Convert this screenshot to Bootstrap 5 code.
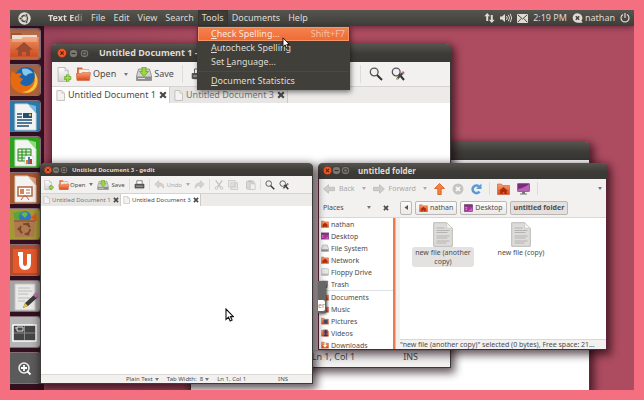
<!DOCTYPE html>
<html lang="en">
<head>
<meta charset="utf-8">
<meta name="viewport" content="width=device-width, initial-scale=1">
<title>Desktop</title>
<link href="https://cdn.jsdelivr.net/npm/bootstrap@5.3.0/dist/css/bootstrap.min.css" rel="stylesheet">
<style>
  body { background: #f46f7f; padding: 10px; font-family: "Noto Sans", "Open Sans", sans-serif; font-size: 9px; line-height: 12px; color: #4c4c4c; }
  button, input, textarea, select { font: inherit; color: inherit; }
  button { background: none; border: 0; padding: 0; white-space: nowrap; }
  svg { display: block; flex: none; }
  .desktop { min-height: calc(100vh - 20px); background: linear-gradient(90deg, #96435a, #ad4c60 40%); }

  /* top panel */
  .panel { height: 16px; background: linear-gradient(#55544e, #3d3c38); color: #dfdbd2; box-shadow: 0 1px 6px rgba(40,10,25,.6); z-index: 20; }
  .logo-slot { width: 38px; padding-left: 8px; }
  .app-name { width: 39px; white-space: nowrap; font-weight: 700; -webkit-mask-image: linear-gradient(90deg, #000 60%, transparent); mask-image: linear-gradient(90deg, #000 60%, transparent); }
  .menu-item { padding: 0 4px; height: 16px; }
  .menu-item.active-menu { background: #3c3b37; box-shadow: 0 0 0 1px #35342f inset; }
  .tray { gap: 5px; padding-right: 4px; }

  /* launcher */
  .launcher { width: 34px; background: #321020; padding-top: 2px; z-index: 1; }
  .tile { width: 31px; height: 32px; margin-bottom: 4px; border-radius: 0 4px 4px 0; overflow: hidden; border: 1px solid rgba(255,255,255,.4); border-left: 0; display: block; }

  /* windows */
  .win { position: absolute; border: 1px solid #3c3b37; border-top: 0; border-radius: 5px 5px 0 0; background: #f2f1f0; box-shadow: 2px 3px 9px 2px rgba(20,0,10,.65); display: flex; flex-direction: column; }
  .bar { background: linear-gradient(#55544e, #3c3b37 55%, #393834); color: #dfdbd2; font-weight: 700; border-radius: 5px 5px 0 0; margin: 0 -1px; }
  .w-first { left: 41px; top: 34px; width: 400px; height: 324px; z-index: 3; }
  .w-back { left: 180px; top: 132px; width: 400px; bottom: -1px; z-index: 2; }
  .w-second { left: 30px; top: 153px; width: 273px; height: 221px; z-index: 6; font-size: 6px; line-height: 8px; }
  .w-files { left: 308px; top: 153px; width: 289px; height: 187px; z-index: 5; font-size: 7px; line-height: 9px; border-color: #5a2236; }
  .w-first .bar, .w-back .bar { height: 18px; padding-left: 6px; gap: 2px; }
  .w-second .bar { height: 13px; padding-left: 4px; font-size: 6px; }
  .w-files .bar { height: 16px; padding-left: 5px; font-size: 8px; }
  .editor { flex: 1; width: 100%; border: 0; resize: none; background: #fff; display: block; min-height: 0; outline: 0; }
  .rule { width: 1px; align-self: stretch; background: #dedcd9; margin: 3px 0; }
  .off { color: #a9a7a3; }
  .caret { width: 0; height: 0; border: 2px solid transparent; border-top: 3px solid #777; border-bottom: 0; display: block; }
  .off .caret, .caret.off { border-top-color: #aaa; }
  .snug { gap: 2px; }

  .tabs { background: #edebe9; border-top: 1px solid #d6d3d0; }
  .doc-tab { border-right: 1px solid #cfccc8; background: #e8e6e4; color: #777; }
  .doc-tab.current { background: #fff; color: #4c4c4c; }
  .w-first .toolbar { height: 24px; padding: 0 5px; }
  .w-first .doc-tab { height: 16px; width: 118px; padding: 0 4px; gap: 3px; }
  .w-second .toolbar { height: 17px; padding: 0 3px; gap: 4px; }
  .w-second .doc-tab { height: 12px; width: 80px; padding: 0 2px; gap: 2px; }
  .status { border-top: 1px solid #dad7d4; }

  /* dropdown menu of the panel */
  .tools-menu { position: absolute; left: 187px; top: 16px; width: 153px; padding: 1px 1px 2px; background: #403f3a; color: #dfdbd2; z-index: 21; box-shadow: 1px 2px 5px rgba(0,0,0,.5); }
  .tools-menu button { height: 14px; padding: 0 4px 0 13px; }
  .tools-menu u { text-decoration-thickness: 1px; text-underline-offset: 1px; }
  .tools-menu .hot { background: linear-gradient(#f58350, #ee6a35); box-shadow: 0 0 0 1px #f79468 inset; color: #fbe6dc; }
  .tools-menu .keys { color: #f3c2a8; }
  .divider { height: 1px; background: #4a4944; margin: 2px 0; }

  /* file manager */
  .w-files .toolbar { height: 20px; gap: 7px; }
  .pathbar { height: 20px; gap: 3px; border-bottom: 1px solid #dad7d4; }
  .crumb { height: 14px; border: 1px solid #bbb8b3; border-radius: 2px; background: linear-gradient(#fbfbfa, #ebe9e7); padding: 0 3px; }
  .crumb.here { background: #e3e0dd; font-weight: 700; }
  .places { width: 74px; background: #fff; overflow: hidden; }
  .places a { height: 12px; padding-left: 2px; gap: 2px; color: inherit; text-decoration: none; white-space: nowrap; }
  .splitter { width: 3px; background: #ee7a4b; border-right: 1px solid #f7b597; }
  .file { width: 62px; background: none; }
  .file span { border-radius: 3px; padding: 1px 0; white-space: normal; }
  .file.picked span { background: #e4e2e0; }

  .tooltip-rest { position: absolute; left: 308px; top: 271px; z-index: 7; font-size: 7px; box-shadow: 1px 1px 3px rgba(0,0,0,.7); background: #666; border-radius: 0 3px 3px 0; padding-top: 19px; color: #888; }
  .tooltip-rest span { display: block; background: #fff; border-radius: 0 2px 2px 0; margin: 0 1px 2px 0; line-height: 11px; }
  .pointer { position: absolute; z-index: 30; }
  .pointer-menu { left: 272px; top: 27px; }
  .pointer-edit { left: 215px; top: 298px; }
</style>
<script src="https://cdn.jsdelivr.net/npm/bootstrap@5.3.0/dist/js/bootstrap.bundle.min.js"></script>
</head>
<body>
<svg width="0" height="0" class="position-absolute" aria-hidden="true">
  <defs>
    <linearGradient id="gFold" x2="0" y2="1"><stop stop-color="#f9a070"/><stop offset="1" stop-color="#d9481c"/></linearGradient>
    <linearGradient id="gDoc" x2="0" y2="1"><stop stop-color="#fff"/><stop offset="1" stop-color="#d2d1cf"/></linearGradient>
  </defs>
  <symbol id="i-close" viewBox="0 0 10 10"><circle cx="5" cy="5" r="4.5" fill="#ee5a2a" stroke="#8c2e12" stroke-width=".7"/><path d="M3.3 3.3l3.4 3.4M6.7 3.3L3.3 6.7" stroke="#5c1f0c" stroke-width="1.2"/></symbol>
  <symbol id="i-min" viewBox="0 0 10 10"><circle cx="5" cy="5" r="4.5" fill="#7b7971" stroke="#33322e" stroke-width=".7"/><path d="M2.8 5h4.4" stroke="#33322e" stroke-width="1.2"/></symbol>
  <symbol id="i-max" viewBox="0 0 10 10"><circle cx="5" cy="5" r="4.5" fill="#7b7971" stroke="#33322e" stroke-width=".7"/><path d="M3 3.3h4v3.4H3z" fill="none" stroke="#33322e"/></symbol>
  <symbol id="i-page" viewBox="0 0 10 12"><path d="M1 .5h5.500l3 3v8H1z" fill="#f4f3f2" stroke="#bdbcb9"/><path d="M6.500.5v3h3" fill="#ddd" stroke="#c5c4c1" stroke-width=".7"/></symbol>
  <symbol id="i-new" viewBox="0 0 14 14"><path d="M1 .5h6.500l3 3v10H1z" fill="url(#gDoc)" stroke="#b4b3b0" stroke-width=".8"/><path d="M7.500.5v3h3" fill="none" stroke="#b4b3b0" stroke-width=".7"/><path d="M10 7v6.500M6.700 10.200h6.600" stroke="#6ba52c" stroke-width="3.200"/><path d="M10 7.500v5.500M7.300 10.200h5.400" stroke="#a2dc50" stroke-width="1.600"/></symbol>
  <symbol id="i-open" viewBox="0 0 15 14"><path d="M1 .5h5l1 1.500h6V12H1z" fill="#d9683c"/><path d="M3 2.500h10v6H3z" fill="#f8f1ea" stroke="#c8bbb0" stroke-width=".5"/><path d="M0 6.500h5l1-1h8.500L13.500 13.500H1z" fill="url(#gFold)" stroke="#c95f35" stroke-width=".5"/></symbol>
  <symbol id="i-save" viewBox="0 0 16 14"><path d="M2.500 2h11L15.500 9v4.500H.5V9z" fill="#d2d2d0" stroke="#858582" stroke-width=".8"/><path d="M.8 9.500h14.400v3.700H.8z" fill="#8d8e8b"/><path d="M2 11.500h7" stroke="#ddd"/><path d="M6 0h4v4.500h2.500L8 9.500 3.500 4.500H6z" fill="#9bd93a" stroke="#5f9a1e" stroke-width=".7"/></symbol>
  <symbol id="i-print" viewBox="0 0 14 13"><path d="M3.500 5V1h7v4" fill="#fff" stroke="#666"/><rect x=".7" y="5" width="12.600" height="6" rx="1" fill="#555"/><path d="M2.500 8h9M2.500 11.500h9" stroke="#ccc"/></symbol>
  <symbol id="i-undo" viewBox="0 0 14 12"><path d="M6 1v3c5 0 7 2 6.500 7-1.500-3-3-3.500-6.500-3.500v3L.8 5.700z" fill="#d4d2cf" stroke="#bab8b4" stroke-width=".7"/></symbol>
  <symbol id="i-cut" viewBox="0 0 12 12"><path d="M2 .5l6 8M10 .5l-6 8" stroke="#c2c0bd" stroke-width="1.500"/><circle cx="3" cy="9.700" r="1.600" fill="none" stroke="#c2c0bd"/><circle cx="9" cy="9.700" r="1.600" fill="none" stroke="#c2c0bd"/></symbol>
  <symbol id="i-copy" viewBox="0 0 12 12"><path d="M.5.5h8v8h-8zM3.500 3.500h8v8h-8z" fill="#e9e8e6" stroke="#c8c6c3"/><path d="M5 6h5M5 8h5" stroke="#ccc"/></symbol>
  <symbol id="i-paste" viewBox="0 0 12 12"><rect x=".6" y="1.500" width="9" height="9.500" rx="1" fill="#d8d6d3" stroke="#c0beba"/><path d="M3 .5h4v2H3z" fill="#bbb"/><path d="M5 4.500h6v7H5z" fill="#f0efed" stroke="#c6c4c0"/></symbol>
  <symbol id="i-find" viewBox="0 0 14 14"><circle cx="5.200" cy="5" r="3.900" fill="#f0f0f0" stroke="#555" stroke-width="1.300"/><path d="M8 8l5 5" stroke="#333" stroke-width="2"/></symbol>
  <symbol id="i-swap" viewBox="0 0 14 14"><circle cx="5.200" cy="5" r="3.900" fill="#f0f0f0" stroke="#555" stroke-width="1.300"/><path d="M8 7l5 6" stroke="#333" stroke-width="2"/><path d="M12.700 5L6 12" stroke="#444" stroke-width="2"/><path d="M6.800 10.500L4.500 13.300l3-1z" fill="#e2c42d"/><path d="M11 5l2 2" stroke="#d077a4" stroke-width="1.500"/></symbol>
  <symbol id="i-x" viewBox="0 0 8 8"><path d="M1.200 1.200l5.600 5.600M6.800 1.200L1.200 6.800" stroke="#4a4a4a" stroke-width="2.200"/></symbol>
  <symbol id="i-arrow" viewBox="0 0 12 10"><path d="M5.500.7v2.600h6v3.400h-6v2.600L.6 5z" fill="#cfcdca" stroke="#b8b6b2" stroke-width=".7"/></symbol>
  <symbol id="i-home" viewBox="0 0 13 12"><path d="M.5 1h4l1 1.500h7v9H.5z" fill="url(#gFold)" stroke="#b8481f" stroke-width=".5"/><path d="M6.500 4l4.500 4H9.700v3H7.400V9H5.600v2H3.300V8H2z" fill="#a82c08"/></symbol>
  <symbol id="i-desk" viewBox="0 0 13 12"><rect x=".5" y="1" width="12" height="10" fill="#a8329f" stroke="#6b3a68"/><path d="M1 1.500h11v2H1z" fill="#5c4a5c"/><path d="M2 5.500h2M2 8h2" stroke="#f0c8ec" stroke-width="1.300"/><path d="M6 10C9 9 11 7 12 5v5.500H6z" fill="#d45bc6"/></symbol>
  <symbol id="i-monitor" viewBox="0 0 13 12"><rect x=".5" y=".5" width="12" height="8" rx=".7" fill="#7c2a80" stroke="#777"/><path d="M1 6c5-1 8-2.500 11-5v7H1z" fill="#b663b4"/><path d="M5 8.500h3v2H5zM3 10.500h7v1H3z" fill="#777"/></symbol>
  <symbol id="i-disk" viewBox="0 0 12 12"><path d="M2.500 1.500h7l2 6v3.500H.5V7.500z" fill="#e2e1df" stroke="#9a9996" stroke-width=".8"/><path d="M.8 8h10.400v3H.8z" fill="#8e8d8a"/></symbol>
  <symbol id="i-floppy" viewBox="0 0 12 12"><rect x=".8" y=".8" width="10.400" height="10.400" rx="1" fill="#e9e8e7" stroke="#bbb"/><path d="M1 8.500h10v2.500H1z" fill="#b9b8b6"/></symbol>
  <symbol id="i-trash" viewBox="0 0 12 12"><path d="M2 2.500h8l-1 9H3z" fill="#909090" stroke="#666"/><path d="M1.300 2h9.400" stroke="#777" stroke-width="1.600"/><path d="M4.500 4v6M7.500 4v6" stroke="#ccc"/></symbol>
  <symbol id="i-folder" viewBox="0 0 12 12"><path d="M.5 1.500h4l1 1.500h6v8H.5z" fill="url(#gFold)" stroke="#c06a48" stroke-width=".5"/></symbol>
  <symbol id="i-sheet" viewBox="0 0 20 25"><path d="M.7.700h13l5.600 5.600v18H.7z" fill="#dddcda" stroke="#bab9b6"/><path d="M13.700.700v5.600h5.600z" fill="#f5f5f4" stroke="#c5c4c1" stroke-width=".7"/><path d="M3.500 6h8M3.500 8.500h13M3.500 10.500h11M3.500 14h13M3.500 16h11M3.500 19h13M3.500 21h10" stroke="#b0afad" stroke-width=".9"/></symbol>
  <symbol id="i-cursor" viewBox="0 0 9 14"><path d="M1 1v10.500l2.500-2.300L5.200 13l1.900-.9-1.700-3.500h3z" fill="#fff" stroke="#111" stroke-width="1.100"/></symbol>
</svg>

<main class="desktop position-relative overflow-hidden d-flex flex-column">
  <header class="panel position-relative d-flex align-items-center">
    <div class="logo-slot"><svg width="13" height="13" viewBox="0 0 13 13"><circle cx="6.500" cy="6.500" r="6.200" fill="#dfdbd2"/><circle cx="6.500" cy="6.500" r="3" fill="none" stroke="#4a4944" stroke-width="1.300"/><g fill="#4a4944" stroke="#dfdbd2" stroke-width=".6"><circle cx="2.600" cy="6.500" r="1.300"/><circle cx="8.500" cy="3.100" r="1.300"/><circle cx="8.500" cy="9.900" r="1.300"/></g></svg></div>
    <div class="app-name">Text Edi</div>
    <nav class="d-flex" aria-label="Application menu">
      <button class="menu-item" type="button">File</button><button class="menu-item" type="button">Edit</button><button class="menu-item" type="button">View</button><button class="menu-item" type="button">Search</button><button class="menu-item active-menu" type="button">Tools</button><button class="menu-item" type="button">Documents</button><button class="menu-item" type="button">Help</button>
    </nav>
    <div class="tray d-flex align-items-center ms-auto">
      <svg width="11" height="10" viewBox="0 0 11 10" fill="#dfdbd2"><path d="M2.200 8V3.300H.3L3.200 0l2.900 3.300H4.200V8zM6.800 2v4.700H4.900L7.800 10l2.900-3.300H8.800V2z"/></svg>
      <svg width="12" height="10" viewBox="0 0 12 10"><path d="M0 3.500h2L5 1v8L2 6.500H0z" fill="#dfdbd2"/><path d="M6.500 3q1.500 2 0 4M8.300 1.800q2.500 3.200 0 6.400M10.200.8q3 4.200 0 8.400" fill="none" stroke="#dfdbd2"/></svg>
      <svg width="11" height="9" viewBox="0 0 11 9"><rect width="11" height="9" rx="1" fill="#dfdbd2"/><path d="M1 1l4.500 4L10 1M1 8l3.200-3.500M10 8L6.800 4.500" stroke="#4a4944" fill="none"/></svg>
      <span>2:19 PM</span>
      <span class="d-flex align-items-center snug"><svg width="11" height="10" viewBox="0 0 10 10"><path d="M5 .2a4.800 4.700 0 0 1 4 7.400L10 9.700H5A4.800 4.700 0 0 1 5 .2z" fill="#dfdbd2"/><path d="M3.300 3.300l3.400 3.400M6.700 3.300L3.300 6.700" stroke="#3f3e3a" stroke-width="1.400"/></svg>nathan</span>
      <svg width="10" height="10" viewBox="0 0 10 10"><path d="M3 1.500a4 4 0 1 0 4 0M5 0v5" fill="none" stroke="#dfdbd2" stroke-width="1.200"/></svg>
    </div>
  </header>

  <aside class="launcher position-relative flex-grow-1" aria-label="Launcher">
    <button class="tile" type="button" aria-label="Home"><svg width="31" height="32" viewBox="0 0 31 32"><rect width="31" height="32" fill="#b76c48"/><path d="M1 7V4h10l2 3h14v20H1z" fill="#a65532"/><path d="M2 6h25v7H2z" fill="#eadfd5"/><path d="M0 10h11l2-2h16l-1 20H0z" fill="url(#gFold)" opacity=".8"/><path d="M14 13l9 8h-3v6h-4v-4h-4v4H8v-6H5z" fill="#9d4a2e"/></svg></button>
    <button class="tile" type="button" aria-label="Firefox"><svg width="31" height="32" viewBox="0 0 31 32"><rect width="31" height="32" fill="#a9603c"/><circle cx="16" cy="13" r="11" fill="#1c65ad"/><path d="M12 4q6-2 11 4-5 0-7 3-4-1-4-7z" fill="#85c8ee"/><path d="M2 6l4 3q3-2 6 0l-3 3 4 2-3 4q4 5 10 2 5-3 5-12 7 14-3 19-12 5-20-5Q-1 14 2 6z" fill="#e56a12"/><path d="M24 6q6 8 2 16-5 8-14 5 9-1 12-8 2-6 0-13z" fill="#f8c63c"/></svg></button>
    <button class="tile" type="button" aria-label="Writer"><svg width="31" height="32" viewBox="0 0 31 32"><rect width="31" height="32" fill="#2b78a9"/><path d="M5 3h13l8 9v17H5z" fill="#f3f3f2" stroke="#c8d4dc"/><path d="M18 3l8 9V5z" fill="#7ab7dc"/><path d="M7 13h5M7 16h5M7 19h15M7 22h15M7 25h12" stroke="#1d5277" stroke-width="1.500"/><path d="M13 12h9v5h-9z" fill="#1d5277"/><circle cx="20" cy="14" r="1.200" fill="#efb94e"/></svg></button>
    <button class="tile" type="button" aria-label="Calc"><svg width="31" height="32" viewBox="0 0 31 32"><rect width="31" height="32" fill="#2da21e"/><path d="M5 3h13l8 9v17H5z" fill="#f3f3f2" stroke="#c7dcc4"/><path d="M18 3l8 9V5z" fill="#8ade75"/><path d="M8 12h13v12H8zM8 15h13M8 18h13M8 21h13M12 12v12M16 12v12" fill="#d8f2d2" stroke="#29891e"/><path d="M15 19h8v8h-8z" fill="#fff" stroke="#bbb" stroke-width=".5"/><path d="M16 23h2v4h-2z" fill="#e57c29"/><path d="M18 20h2v7h-2z" fill="#3a7cc2"/><path d="M20 22h2v5h-2z" fill="#c23a2a"/></svg></button>
    <button class="tile" type="button" aria-label="Impress"><svg width="31" height="32" viewBox="0 0 31 32"><rect width="31" height="32" fill="#a4562c"/><path d="M5 3h13l8 9v17H5z" fill="#f3f3f2" stroke="#ddcabd"/><path d="M18 3l8 9V5z" fill="#e0a47f"/><path d="M8 14h14v9H8z" fill="#fff" stroke="#b9653c" stroke-width="1.500"/><path d="M10 16h4v5h-4z" fill="#d98255"/><path d="M16 17h4M16 20h4M11 27l3-4h2l3 4" fill="none" stroke="#b9653c"/></svg></button>
    <button class="tile" type="button" aria-label="Software Centre"><svg width="31" height="32" viewBox="0 0 31 32"><rect width="31" height="32" fill="#a79836"/><path d="M3 4l8-2 2 8-8 1z" fill="#57a63c"/><circle cx="15" cy="8" r="6" fill="#2c77bd"/><path d="M11 5q4-4 7 0l-3 4z" fill="#69b84a"/><path d="M20 9l6-5 1 8z" fill="#db5a20"/><path d="M4 11h21l-1 17H5z" fill="#b07a50"/><path d="M4 11h21v2H4z" fill="#94633f"/><circle cx="15" cy="20" r="5" fill="none" stroke="#79492b" stroke-width="2" stroke-dasharray="8 2.500"/><circle cx="9" cy="20" r="1.600" fill="#79492b"/><circle cx="18" cy="15" r="1.600" fill="#79492b"/><circle cx="18" cy="25" r="1.600" fill="#79492b"/></svg></button>
    <button class="tile" type="button" aria-label="Ubuntu One"><svg width="31" height="32" viewBox="0 0 31 32"><rect width="31" height="32" fill="#b04f30"/><rect x="3" y="4" width="24" height="24" rx="1" fill="#e4582b"/><path d="M8 9h3v9q0 5 4 5t4-5V9" fill="none" stroke="#fff" stroke-width="4"/></svg></button>
    <button class="tile" type="button" aria-label="Text Editor"><svg width="31" height="32" viewBox="0 0 31 32"><rect width="31" height="32" fill="#a5a4a4"/><path d="M5 3h20v26H5z" fill="#e9e9e8" stroke="#c5c5c4"/><path d="M8 7h12M8 10h14M8 13h10M8 17h12M8 20h7" stroke="#bcbcbb"/><path d="M25 13l3 3-10 9-5 2 2-5z" fill="#3a3a3a"/><path d="M13 27l2-5 3 3z" fill="#e8c53a"/><path d="M23 14l3-3 3 3-3 3z" fill="#c272a7"/></svg></button>
    <button class="tile" type="button" aria-label="Workspaces"><svg width="31" height="32" viewBox="0 0 31 32"><rect width="31" height="32" fill="#b7b6b7"/><rect x="3" y="8" width="23" height="16" fill="#454545" stroke="#fff" stroke-width="1.500"/><path d="M14.500 9v14M4 16h21" stroke="#8a8a8a"/><path d="M7 10h6v4H7zM5 11h2" fill="none" stroke="#ddd"/></svg></button>
    <button class="tile" type="button" aria-label="Lens"><svg width="31" height="32" viewBox="0 0 31 32"><rect width="31" height="32" fill="#5c5b5c"/><circle cx="14" cy="15" r="5" fill="none" stroke="#f1f1f1" stroke-width="1.500"/><path d="M14 12v6M11 15h6M17.500 18.500l3 3" stroke="#fff" stroke-width="1.800"/></svg></button>
  </aside>

  <section class="win w-first" aria-label="Untitled Document 1">
    <div class="bar d-flex align-items-center">
      <svg width="10" height="10"><use href="#i-close"/></svg><svg width="9" height="9"><use href="#i-min"/></svg><svg width="9" height="9"><use href="#i-max"/></svg>
      <span class="ms-2">Untitled Document 1 - </span>
    </div>
    <div class="toolbar d-flex align-items-center">
      <button type="button" aria-label="New"><svg width="15" height="15"><use href="#i-new"/></svg></button>
      <button class="d-flex align-items-center snug ms-1" type="button"><svg width="15" height="14"><use href="#i-open"/></svg>Open</button>
      <span class="caret ms-2"></span>
      <button class="d-flex align-items-center snug ms-2" type="button"><svg width="16" height="14"><use href="#i-save"/></svg>Save</button>
      <span class="rule ms-2"></span>
      <button class="ms-2" type="button" aria-label="Print"><svg width="14" height="13"><use href="#i-print"/></svg></button>
      <span class="rule ms-auto"></span>
      <button class="ms-2" type="button" aria-label="Find"><svg width="14" height="14"><use href="#i-find"/></svg></button>
      <button class="ms-2 me-4 pe-3" type="button" aria-label="Replace"><svg width="14" height="14"><use href="#i-swap"/></svg></button>
    </div>
    <div class="tabs d-flex">
      <button class="doc-tab current d-flex align-items-center" type="button"><svg width="9" height="11"><use href="#i-page"/></svg>Untitled Document 1<svg class="ms-auto" width="8" height="8"><use href="#i-x"/></svg></button>
      <button class="doc-tab d-flex align-items-center" type="button"><svg width="9" height="11"><use href="#i-page"/></svg>Untitled Document 3<svg class="ms-auto" width="8" height="8"><use href="#i-x"/></svg></button>
    </div>
    <textarea class="editor" aria-label="Document text"></textarea>
    <div class="status d-flex justify-content-end gap-5 px-4 pb-1"><span>Ln 1, Col 1</span><span class="me-2">INS</span></div>
  </section>

  <section class="win w-back bg-white" aria-label="Background window"><div class="bar"></div></section>

  <section class="win w-second" aria-label="Untitled Document 3">
    <div class="bar d-flex align-items-center">
      <svg width="8" height="8"><use href="#i-close"/></svg><svg width="8" height="8"><use href="#i-min"/></svg><svg width="8" height="8"><use href="#i-max"/></svg>
      <span class="ms-1">Untitled Document 3 - gedit</span>
    </div>
    <div class="toolbar d-flex align-items-center">
      <button type="button" aria-label="New"><svg width="10" height="10"><use href="#i-new"/></svg></button>
      <button class="d-flex align-items-center" type="button"><svg width="12" height="10"><use href="#i-open"/></svg>Open</button>
      <span class="caret"></span>
      <button class="d-flex align-items-center snug" type="button"><svg width="12" height="10"><use href="#i-save"/></svg>Save</button>
      <span class="rule"></span>
      <button type="button" aria-label="Print"><svg width="11" height="10"><use href="#i-print"/></svg></button>
      <span class="rule"></span>
      <button class="off d-flex align-items-center snug" type="button"><svg width="11" height="9"><use href="#i-undo"/></svg>Undo</button>
      <span class="caret off"></span>
      <button type="button" aria-label="Redo"><svg width="11" height="9" viewBox="0 0 14 12"><use href="#i-undo" transform="matrix(-1 0 0 1 14 0)" width="14" height="12"/></svg></button>
      <span class="rule"></span>
      <button type="button" aria-label="Cut"><svg width="10" height="10"><use href="#i-cut"/></svg></button>
      <button type="button" aria-label="Copy"><svg width="10" height="10"><use href="#i-copy"/></svg></button>
      <button class="ms-1" type="button" aria-label="Paste"><svg width="10" height="10"><use href="#i-paste"/></svg></button>
      <span class="rule"></span>
      <button type="button" aria-label="Find"><svg width="10" height="10"><use href="#i-find"/></svg></button>
      <button type="button" aria-label="Replace"><svg width="10" height="10"><use href="#i-swap"/></svg></button>
    </div>
    <div class="tabs d-flex">
      <button class="doc-tab d-flex align-items-center" type="button"><svg width="7" height="8"><use href="#i-page"/></svg>Untitled Document 1<svg class="ms-auto" width="6" height="6"><use href="#i-x"/></svg></button>
      <button class="doc-tab current d-flex align-items-center" type="button"><svg width="7" height="8"><use href="#i-page"/></svg>Untitled Document 3<svg class="ms-auto" width="6" height="6"><use href="#i-x"/></svg></button>
    </div>
    <textarea class="editor" aria-label="Document text"></textarea>
    <div class="status d-flex justify-content-end align-items-center gap-2 pe-4">
      <button class="d-flex align-items-center snug" type="button">Plain Text <span class="caret"></span></button>
      <button class="d-flex align-items-center snug" type="button">Tab Width: &nbsp;8 <span class="caret"></span></button>
      <span>Ln 1, Col 1</span><span class="ms-4">INS</span>
    </div>
  </section>

  <section class="win w-files" aria-label="untitled folder">
    <div class="bar d-flex align-items-center">
      <svg width="9" height="9"><use href="#i-close"/></svg><svg width="9" height="9"><use href="#i-min"/></svg><svg width="9" height="9"><use href="#i-max"/></svg>
      <span class="ms-2">untitled folder</span>
    </div>
    <div class="toolbar d-flex align-items-center px-1">
      <button class="off d-flex align-items-center gap-1" type="button"><svg width="12" height="10"><use href="#i-arrow"/></svg>Back</button>
      <span class="caret off"></span>
      <button class="off d-flex align-items-center gap-1" type="button"><svg width="12" height="10" viewBox="0 0 12 10"><use href="#i-arrow" transform="matrix(-1 0 0 1 12 0)" width="12" height="10"/></svg>Forward</button>
      <span class="caret off"></span>
      <button type="button" aria-label="Up"><svg width="11" height="12" viewBox="0 0 11 12"><path d="M5.500.5l5 5H7.200V11.500H3.800V5.500H.5z" fill="#f5813f" stroke="#cb5b1c" stroke-width=".8"/></svg></button>
      <button type="button" aria-label="Stop"><svg width="12" height="12" viewBox="0 0 12 12"><circle cx="6" cy="6" r="5.500" fill="#c6c4c2"/><path d="M4 4l4 4M8 4L4 8" stroke="#fff" stroke-width="1.500"/></svg></button>
      <button type="button" aria-label="Reload"><svg width="11" height="12" viewBox="0 0 11 12"><path d="M8.500 8.500A3.800 3.800 0 1 1 8 3.500" fill="none" stroke="#5c9bd6" stroke-width="2.600"/><path d="M10.500.5v5.500H5z" fill="#5c9bd6"/></svg></button>
      <span class="rule"></span>
      <button type="button" aria-label="Home"><svg width="13" height="12"><use href="#i-home"/></svg></button>
      <button type="button" aria-label="Computer"><svg width="13" height="12"><use href="#i-monitor"/></svg></button>
      <span class="rule"></span>
      <span class="caret ms-auto"></span>
    </div>
    <div class="pathbar d-flex align-items-center">
      <div class="places bg-transparent d-flex align-items-center justify-content-between ps-1"><span>Places</span><span class="d-flex align-items-center gap-2"><span class="caret"></span><svg class="me-1 ms-1" width="6" height="6"><use href="#i-x"/></svg></span></div>
      <button class="crumb ms-1" type="button" aria-label="Scroll left"><svg width="4" height="5" viewBox="0 0 4 5"><path d="M4 0v5L.5 2.500z" fill="#555"/></svg></button>
      <button class="crumb d-flex align-items-center snug" type="button"><svg width="9" height="8"><use href="#i-home"/></svg>nathan</button>
      <button class="crumb d-flex align-items-center snug" type="button"><svg width="9" height="8"><use href="#i-desk"/></svg>Desktop</button>
      <button class="crumb here" type="button">untitled folder</button>
    </div>
    <div class="d-flex flex-grow-1 overflow-hidden">
      <nav class="places" aria-label="Places">
        <a class="d-flex align-items-center" href="#"><svg width="8" height="8"><use href="#i-home"/></svg>nathan</a>
        <a class="d-flex align-items-center" href="#"><svg width="8" height="8"><use href="#i-desk"/></svg>Desktop</a>
        <a class="d-flex align-items-center" href="#"><svg width="8" height="8"><use href="#i-disk"/></svg>File System</a>
        <a class="d-flex align-items-center" href="#"><svg width="8" height="8"><use href="#i-home"/></svg>Network</a>
        <a class="d-flex align-items-center" href="#"><svg width="8" height="8"><use href="#i-floppy"/></svg>Floppy Drive</a>
        <a class="d-flex align-items-center" href="#"><svg width="8" height="8"><use href="#i-trash"/></svg>Trash</a>
        <div class="border-top"></div>
        <a class="d-flex align-items-center" href="#"><svg width="8" height="8"><use href="#i-folder"/></svg>Documents</a>
        <a class="d-flex align-items-center" href="#"><svg width="8" height="8"><use href="#i-folder"/></svg>Music</a>
        <a class="d-flex align-items-center" href="#"><svg width="8" height="8" viewBox="0 0 12 12"><use href="#i-folder" width="12" height="12"/><path d="M4 4h6v6H4z" fill="#444a66"/></svg>Pictures</a>
        <a class="d-flex align-items-center" href="#"><svg width="8" height="8" viewBox="0 0 12 12"><use href="#i-folder" width="12" height="12"/><path d="M4 1h6v10H4z" fill="#5b2944"/><path d="M5 2v8M9 2v8" stroke="#ccc" stroke-dasharray="1 1"/></svg>Videos</a>
        <a class="d-flex align-items-center" href="#"><svg width="8" height="8" viewBox="0 0 12 12"><use href="#i-folder" width="12" height="12"/><path d="M7 3v3h2L6 10 3 6h2V3z" fill="#fff"/></svg>Downloads</a>
      </nav>
      <div class="splitter"></div>
      <div class="d-flex flex-column flex-grow-1 ps-1 overflow-hidden">
        <div class="d-flex align-items-start flex-grow-1 bg-white gap-3 pt-1 ps-2">
          <button class="file picked d-flex flex-column align-items-center ms-1" type="button"><svg width="20" height="25"><use href="#i-sheet"/></svg><span>new file (another copy)</span></button>
          <button class="file d-flex flex-column align-items-center" type="button"><svg width="20" height="25"><use href="#i-sheet"/></svg><span>new file (copy)</span></button>
        </div>
        <div class="status text-nowrap">"new file (another copy)" selected (0 bytes), Free space: 21…</div>
      </div>
    </div>
  </section>

  <div class="tooltip-rest"><span>er</span></div>

  <div class="tools-menu d-flex flex-column" role="menu">
    <button class="hot d-flex align-items-center justify-content-between" type="button" role="menuitem"><span><u>C</u>heck Spelling...</span><span class="keys">Shift+F7</span></button>
    <button class="text-start" type="button" role="menuitem"><u>A</u>utocheck Spelling</button>
    <button class="text-start" type="button" role="menuitem">Set <u>L</u>anguage...</button>
    <div class="divider"></div>
    <button class="text-start" type="button" role="menuitem"><u>D</u>ocument Statistics</button>
  </div>
  <svg class="pointer pointer-menu" width="8" height="12"><use href="#i-cursor"/></svg>
  <svg class="pointer pointer-edit" width="9" height="14"><use href="#i-cursor"/></svg>
</main>
</body>
</html>
